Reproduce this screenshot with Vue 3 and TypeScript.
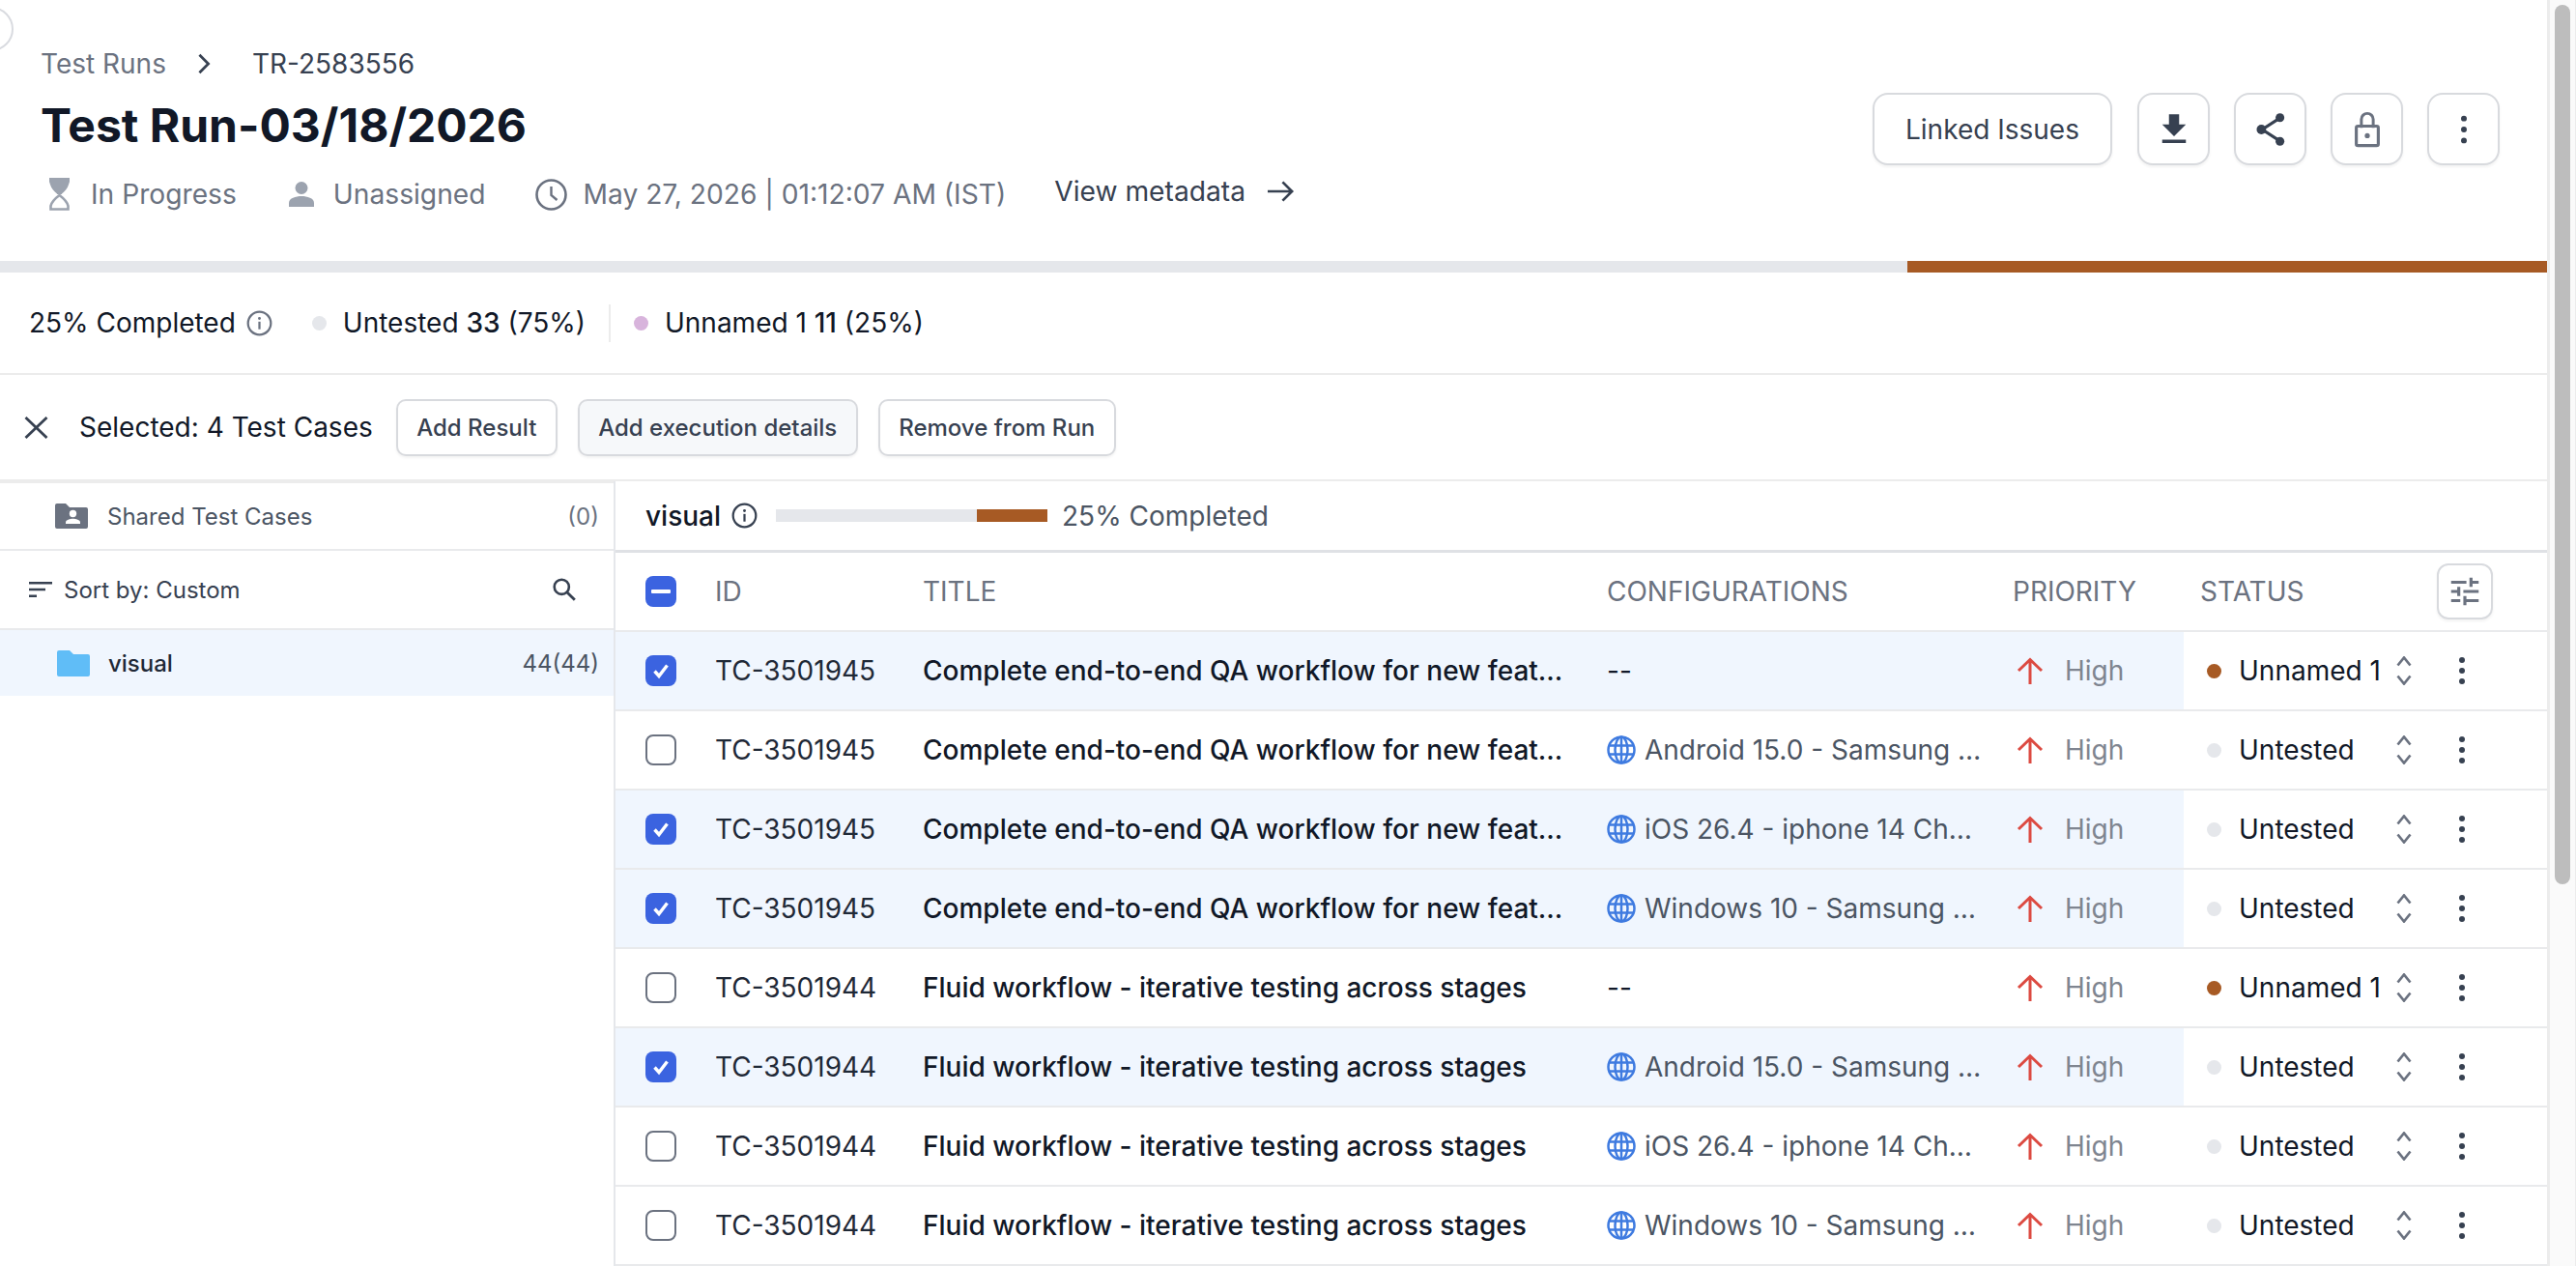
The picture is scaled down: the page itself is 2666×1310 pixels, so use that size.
<script setup lang="ts">
interface TestCase {
  id: string
  title: string
  config: string | null
  status: 'Unnamed 1' | 'Untested'
  selected: boolean
}

const QA_TITLE = 'Complete end-to-end QA workflow for new feat…'
const FLUID_TITLE = 'Fluid workflow - iterative testing across stages'
const ANDROID = 'Android 15.0 - Samsung …'
const IOS = 'iOS 26.4 - iphone 14 Ch…'
const WINDOWS = 'Windows 10 - Samsung …'

const rows: TestCase[] = [
  { id: 'TC-3501945', title: QA_TITLE, config: null, status: 'Unnamed 1', selected: true },
  { id: 'TC-3501945', title: QA_TITLE, config: ANDROID, status: 'Untested', selected: false },
  { id: 'TC-3501945', title: QA_TITLE, config: IOS, status: 'Untested', selected: true },
  { id: 'TC-3501945', title: QA_TITLE, config: WINDOWS, status: 'Untested', selected: true },
  { id: 'TC-3501944', title: FLUID_TITLE, config: null, status: 'Unnamed 1', selected: false },
  { id: 'TC-3501944', title: FLUID_TITLE, config: ANDROID, status: 'Untested', selected: true },
  { id: 'TC-3501944', title: FLUID_TITLE, config: IOS, status: 'Untested', selected: false },
  { id: 'TC-3501944', title: FLUID_TITLE, config: WINDOWS, status: 'Untested', selected: false },
]
</script>

<template>
  <div class="page">
    <div class="main">
      <span class="collapse-handle"></span>

      <header class="top">
        <div class="top-left">
          <div class="crumbs">
            <span class="crumb-link">Test Runs</span>
            <svg class="crumb-sep" viewBox="0 0 24 24"><path d="M7 2l10 10L7 22" fill="none" stroke="currentColor" stroke-width="3" /></svg>
            <span class="crumb-current">TR-2583556</span>
          </div>
          <h1>Test Run-03/18/2026</h1>
          <div class="meta">
            <span class="meta-item m-progress">
              <svg class="ic-hour" viewBox="0 0 21 34">
                <path d="M0 0h21v4l-1 3c-1 4-4 7-7 9.500V17H8v-.5C5 14 2 11 1 7L0 4z" fill="#9ca3af" />
                <path d="M1.500 32.500V29c1-4 5-8 9-11 4 3 8 7 9 11v3.500z" fill="none" stroke="#9ca3af" stroke-width="2.600" />
              </svg>
              In Progress
            </span>
            <span class="meta-item m-user">
              <svg class="ic-user" viewBox="0 0 26 26">
                <circle cx="13" cy="6.500" r="6.500" fill="#9ca3af" />
                <path d="M0 26v-4c0-5 7-7 13-7s13 2 13 7v4z" fill="#9ca3af" />
              </svg>
              Unassigned
            </span>
            <span class="meta-item m-date">
              <svg class="ic-clock" viewBox="0 0 33 33">
                <circle cx="16.500" cy="16.500" r="15" fill="none" stroke="#6b7280" stroke-width="2.600" />
                <path d="M16.500 8v9l6 5" fill="none" stroke="#6b7280" stroke-width="2.400" />
              </svg>
              May 27, 2026 | 01:12:07 AM (IST)
            </span>
            <span class="meta-link">
              View metadata
              <svg class="ic-arrow" viewBox="0 0 30 24"><path d="M1 12h26M17 2l10 10-10 10" fill="none" stroke="currentColor" stroke-width="2.800" /></svg>
            </span>
          </div>
        </div>
        <div class="top-actions">
          <button class="btn-outline btn-linked">Linked Issues</button>
          <button class="btn-outline btn-icon">
            <svg viewBox="0 0 24 24"><path d="M19 9h-4V3H9v6H5l7 7 7-7zM5 18v2h14v-2H5z" fill="#374151" /></svg>
          </button>
          <button class="btn-outline btn-icon">
            <svg viewBox="0 0 24 24">
              <path d="M17 5.500L7 12l10 6.500" fill="none" stroke="#374151" stroke-width="1.800" />
              <circle cx="17.500" cy="5" r="2.600" fill="#374151" />
              <circle cx="6.500" cy="12" r="2.800" fill="#374151" />
              <circle cx="17.500" cy="19" r="2.600" fill="#374151" />
            </svg>
          </button>
          <button class="btn-outline btn-icon">
            <svg viewBox="0 0 24 24">
              <path d="M8.500 11V6a3.500 3.500 0 017 0v5" fill="none" stroke="#6b7280" stroke-width="1.700" />
              <rect x="5.500" y="10" width="13" height="11.500" rx="1" fill="none" stroke="#6b7280" stroke-width="1.800" />
              <circle cx="12" cy="15.700" r="1.500" fill="#6b7280" />
            </svg>
          </button>
          <button class="btn-outline btn-icon">
            <svg viewBox="0 0 24 24"><g fill="#374151"><circle cx="12" cy="5.500" r="1.700" /><circle cx="12" cy="12" r="1.700" /><circle cx="12" cy="18.500" r="1.700" /></g></svg>
          </button>
        </div>
      </header>

      <div class="run-progress"><span class="run-progress-done"></span></div>

      <section class="stats">
        <span class="stats-total">25% Completed</span>
        <svg class="ic-info ic-info--grey" viewBox="0 0 24 24">
          <circle cx="12" cy="12" r="10.500" fill="none" stroke="currentColor" stroke-width="2" />
          <circle cx="12" cy="7.500" r="1.300" fill="currentColor" />
          <path d="M12 10.500v7" stroke="currentColor" stroke-width="2" />
        </svg>
        <span class="dot dot-grey stats-dot1"></span>
        <span class="stats-label">Untested <b>33</b> (75%)</span>
        <span class="stats-divider"></span>
        <span class="dot dot-pink"></span>
        <span class="stats-label">Unnamed 1 <b>11</b> (25%)</span>
      </section>

      <section class="selection">
        <svg class="ic-close" viewBox="0 0 25 23"><path d="M1.500 1l22 21M23.500 1l-22 21" stroke="#374151" stroke-width="2.800" /></svg>
        <span class="selection-text">Selected: 4 Test Cases</span>
        <button class="btn-small btn-result">Add Result</button>
        <button class="btn-small btn-exec">Add execution details</button>
        <button class="btn-small btn-remove">Remove from Run</button>
      </section>

      <div class="content">
        <aside class="tree">
          <div class="tree-shared">
            <svg class="ic-shared" viewBox="0 0 34 26">
              <path d="M2 0h9l4 4h17a2 2 0 012 2v18a2 2 0 01-2 2H2a2 2 0 01-2-2V2a2 2 0 012-2z" fill="#6b7280" />
              <circle cx="18.500" cy="10.500" r="3.700" fill="#fff" />
              <path d="M11 21v-1.500c0-2.500 4.500-3.700 7.500-3.700s7.500 1.200 7.500 3.700V21z" fill="#fff" />
            </svg>
            <span class="tree-shared-label">Shared Test Cases</span>
            <span class="tree-shared-count">(0)</span>
          </div>
          <div class="tree-sort">
            <svg class="ic-sort" viewBox="0 0 24 16"><path d="M0 0h24v2.600H0zM0 6.700h17v2.600H0zM0 13.400h8V16H0z" fill="#374151" /></svg>
            <span class="tree-sort-label">Sort by: Custom</span>
            <svg class="ic-search" viewBox="0 0 24 24"><circle cx="9.500" cy="9.500" r="7" fill="none" stroke="#374151" stroke-width="2.400" /><path d="M14.500 14.500L22 22" stroke="#374151" stroke-width="2.600" /></svg>
          </div>
          <div class="tree-folder">
            <svg class="ic-folder" viewBox="0 0 34 27"><path d="M2 0h11l4 4h15a2 2 0 012 2v19a2 2 0 01-2 2H2a2 2 0 01-2-2V2a2 2 0 012-2z" fill="#60bdf7" /></svg>
            <span class="tree-folder-name">visual</span>
            <span class="tree-folder-count">44(44)</span>
          </div>
        </aside>

        <div class="cases">
          <div class="cases-head">
            <span class="cases-name">visual</span>
            <svg class="ic-info" viewBox="0 0 24 24">
              <circle cx="12" cy="12" r="10.500" fill="none" stroke="currentColor" stroke-width="2" />
              <circle cx="12" cy="7.500" r="1.300" fill="currentColor" />
              <path d="M12 10.500v7" stroke="currentColor" stroke-width="2" />
            </svg>
            <span class="mini-progress"><span class="mini-progress-done"></span></span>
            <span class="cases-pct">25% Completed</span>
          </div>

          <div class="row row-head">
            <div class="row-main">
              <span class="cell-check"><span class="check check--on"><span class="check-minus"></span></span></span>
              <span>ID</span>
              <span>TITLE</span>
              <span>CONFIGURATIONS</span>
              <span>PRIORITY</span>
            </div>
            <span class="head-status">STATUS</span>
            <span class="btn-tune">
              <svg viewBox="0 0 24 24"><path d="M3 17v2h6v-2H3zM3 5v2h10V5H3zm10 16v-2h8v-2h-8v-2h-2v6h2zM7 9v2H3v2h4v2h2V9H7zm14 4v-2H11v2h10zm-6-4h2V7h4V5h-4V3h-2v6z" fill="#6b7280" /></svg>
            </span>
          </div>

          <div v-for="(row, i) in rows" :key="i" class="row">
            <div class="row-main" :class="{ 'row-main--selected': row.selected }">
              <span class="cell-check">
                <span class="check" :class="{ 'check--on': row.selected }">
                  <svg v-if="row.selected" viewBox="0 0 32 32"><path d="M9.500 16.500l4.500 5 8.500-11" fill="none" stroke="#fff" stroke-width="3.400" /></svg>
                </span>
              </span>
              <span class="cell-id">{{ row.id }}</span>
              <span class="cell-title">{{ row.title }}</span>
              <span class="cell-config">
                <template v-if="row.config">
                  <svg class="ic-globe" viewBox="0 0 30 30">
                    <g fill="none" stroke="#3f7be0" stroke-width="2.500">
                      <circle cx="15" cy="15" r="13.500" />
                      <ellipse cx="15" cy="15" rx="6.500" ry="13.500" />
                      <path d="M15 1.500v27M2 10.500h26M2 19.500h26" />
                    </g>
                  </svg>
                  <span class="config-text">{{ row.config }}</span>
                </template>
                <span v-else class="config-none">--</span>
              </span>
              <span class="cell-priority">
                <svg class="ic-up" viewBox="0 0 28 28"><path d="M14 28V2.500M2 14L14 2.500 26 14" fill="none" stroke="#dc4a41" stroke-width="3" /></svg>
                High
              </span>
            </div>
            <div class="cell-status">
              <span class="dot" :class="row.status === 'Untested' ? 'dot-grey' : 'dot-brown'"></span>
              <span class="status-text">{{ row.status }}</span>
              <svg class="ic-updown" viewBox="0 0 16 30"><path d="M1.500 9.500l6.500-8 6.500 8M1.500 20.500l6.500 8 6.500-8" fill="none" stroke="#6b7280" stroke-width="2.700" /></svg>
            </div>
            <div class="cell-more">
              <svg viewBox="0 0 8 30"><g fill="#374151"><circle cx="4" cy="4" r="3" /><circle cx="4" cy="15" r="3" /><circle cx="4" cy="26" r="3" /></g></svg>
            </div>
          </div>
        </div>
      </div>
    </div>

    <div class="scroll-track"><span class="scroll-thumb"></span></div>
  </div>
</template>

<style scoped>
.page {
  display: flex;
  height: 1310px;
  overflow: hidden;
  background: #fff;
  color: #111827;
  font-family: Inter, "Liberation Sans", sans-serif;
  font-size: 28px;
}
.main { position: relative; width: 2636px; flex-shrink: 0; }
.scroll-track {
  flex: 1;
  background: #fafafa;
  border-left: 3px solid #ececec;
  border-right: 1px solid #ececec;
  padding: 5px 0 0 5px;
}
.scroll-thumb {
  display: block;
  width: 16px;
  height: 910px;
  border-radius: 8px;
  background: #bdbdbd;
}
.collapse-handle {
  position: absolute;
  left: -32px;
  top: 7px;
  width: 42px;
  height: 42px;
  border-radius: 50%;
  border: 2px solid #d9dbe0;
  background: #fff;
}

.top { display: flex; justify-content: space-between; height: 270px; padding: 0 49px 0 42px; box-sizing: border-box; }
.crumbs { display: flex; align-items: center; margin-top: 50px; height: 32px; color: #6b7280; }
.crumb-sep { width: 22px; height: 22px; margin: 0 39px 0 28px; color: #374151; }
.crumb-current { color: #374151; }
h1 { margin: 20px 0 0; font-size: 48px; line-height: 56px; font-weight: 700; color: #111827; }
.meta { display: flex; align-items: center; margin-top: 25px; height: 36px; color: #6b7280; font-size: 28.2px; }
.meta-item { display: flex; align-items: center; }
.ic-hour { width: 21px; height: 34px; margin: 0 22px 0 9px; }
.ic-user { width: 26px; height: 26px; margin-right: 20px; }
.ic-clock { width: 33px; height: 33px; margin-right: 17px; }
.m-progress { margin-right: 54px; }
.m-user { margin-right: 51px; }
.m-date { margin-right: 50px; }
.meta-link { display: flex; align-items: center; color: #374151; margin-top: -6px; }
.ic-arrow { width: 29px; height: 24px; margin-left: 22px; }
.top-actions { display: flex; gap: 25px; padding-top: 96px; }
.btn-outline {
  height: 75px;
  border: 2px solid #d8dade;
  border-radius: 16px;
  background: #fff;
  box-shadow: 0 2px 3px rgba(0, 0, 0, 0.05);
  color: #374151;
  font: inherit;
  padding: 0;
}
.btn-linked { width: 248px; margin-right: 1px; }
.btn-icon { width: 75px; display: flex; align-items: center; justify-content: center; }
.btn-icon svg { width: 42px; height: 42px; }

.run-progress { height: 12px; background: #e5e7eb; }
.run-progress-done { display: block; height: 100%; margin-left: 74.9%; background: #a75a24; }

.stats {
  display: flex;
  align-items: center;
  height: 104px;
  padding-left: 30px;
  border-bottom: 2px solid #ececec;
}
.ic-info { width: 27px; height: 27px; margin-left: 11px; color: #374151; flex-shrink: 0; }
.ic-info--grey { color: #6b7280; }
.dot { width: 15px; height: 15px; border-radius: 50%; flex-shrink: 0; }
.dot-grey { background: #e5e7eb; }
.dot-pink { background: #d8b4dc; }
.dot-brown { background: #a75a24; }
.stats-dot1 { margin-left: 41px; }
.stats-label { margin-left: 17px; }
.stats-label b { font-weight: 500; }
.stats-divider { width: 2px; height: 39px; background: #ececec; margin: 0 24px; }

.selection {
  display: flex;
  align-items: center;
  height: 108px;
  padding-left: 25px;
  border-bottom: 2px solid #ececec;
}
.ic-close { width: 25px; height: 23px; margin-right: 32px; }
.selection-text { margin-right: 24px; }
.btn-small {
  height: 59px;
  border: 2px solid #d8dade;
  border-radius: 10px;
  background: #fff;
  color: #374151;
  font: inherit;
  font-size: 24px;
  font-weight: 500;
  padding: 0;
  box-shadow: 0 2px 3px rgba(0, 0, 0, 0.05);
}
.btn-result { width: 167px; margin-right: 21px; }
.btn-exec { width: 290px; margin-right: 21px; background: #f6f8fa; }
.btn-remove { width: 246px; }

.content { display: flex; }
.tree { width: 635px; flex-shrink: 0; border-right: 2px solid #e5e7eb; height: 813px; }
.tree-shared {
  display: flex;
  align-items: center;
  height: 68px;
  padding: 0 15px 0 57px;
  border-top: 2px solid #ececec;
  border-bottom: 2px solid #e9eaec;
  color: #4b5563;
  font-size: 24px;
}
.ic-shared { width: 34px; height: 26px; margin-right: 20px; }
.tree-shared-count { margin-left: auto; color: #6b7280; }
.tree-sort {
  display: flex;
  align-items: center;
  height: 80px;
  padding: 0 38px 0 30px;
  border-bottom: 2px solid #e9eaec;
  color: #374151;
  font-size: 24px;
}
.ic-sort { width: 24px; height: 16px; margin-right: 12px; }
.ic-search { width: 26px; height: 26px; margin-left: auto; }
.tree-folder {
  display: flex;
  align-items: center;
  height: 68px;
  padding: 0 15px 0 59px;
  background: #f0f6fe;
  font-size: 24px;
  font-weight: 500;
  color: #1f2937;
}
.ic-folder { width: 34px; height: 27px; margin-right: 19px; }
.tree-folder-count { margin-left: auto; color: #4b5563; font-weight: 400; }

.cases { flex: 1; min-width: 0; }
.cases-head {
  display: flex;
  align-items: center;
  height: 71px;
  padding-left: 31px;
  border-bottom: 3px solid #dfe1e5;
}
.cases-name { font-weight: 500; }
.mini-progress { width: 281px; height: 13px; margin: 0 15px 0 19px; background: #e5e7eb; }
.mini-progress-done { display: block; height: 100%; margin-left: 74%; background: #a75a24; }
.cases-pct { color: #4b5563; }

.row { display: flex; height: 82px; box-sizing: border-box; border-bottom: 2px solid #e9eaec; }
.row-main {
  display: grid;
  grid-template-columns: 103px 215px 708px 420px 177px;
  align-items: center;
  width: 1623px;
  flex-shrink: 0;
}
.row-main--selected { background: #f0f6fe; }
.row-head { color: #6b7280; }
.head-status { width: 262px; padding-left: 17px; box-sizing: border-box; align-self: center; }
.btn-tune {
  width: 58px;
  height: 58px;
  box-sizing: border-box;
  align-self: center;
  display: flex;
  align-items: center;
  justify-content: center;
  border: 2px solid #d8dade;
  border-radius: 12px;
  box-shadow: 0 2px 3px rgba(0, 0, 0, 0.05);
}
.btn-tune svg { width: 38px; height: 38px; }
.cell-check { display: flex; padding-left: 31px; }
.check {
  width: 32px;
  height: 32px;
  box-sizing: border-box;
  border: 2px solid #6b7280;
  border-radius: 8px;
  display: flex;
  align-items: center;
  justify-content: center;
}
.check svg { width: 32px; height: 32px; flex-shrink: 0; }
.check--on { background: #3b63e0; border: none; }
.check-minus { width: 20px; height: 4px; background: #fff; border-radius: 1px; }
.cell-id { color: #1f2937; }
.cell-title { font-weight: 500; white-space: nowrap; }
.cell-config { display: flex; align-items: center; color: #4b5563; }
.ic-globe { width: 30px; height: 30px; margin-right: 9px; flex-shrink: 0; }
.config-text { white-space: nowrap; }
.config-none { color: #111827; }
.cell-priority { display: flex; align-items: center; color: #7f8590; }
.ic-up { width: 28px; height: 28px; margin: 0 22px 0 4px; }
.cell-status {
  display: flex;
  align-items: center;
  width: 260px;
  box-sizing: border-box;
  padding-left: 24px;
  position: relative;
}
.status-text { margin-left: 18px; color: #111827; }
.ic-updown { position: absolute; left: 220px; width: 16px; height: 30px; }
.cell-more { display: flex; align-items: center; padding-left: 24px; }
.cell-more svg { width: 8px; height: 30px; }
</style>
